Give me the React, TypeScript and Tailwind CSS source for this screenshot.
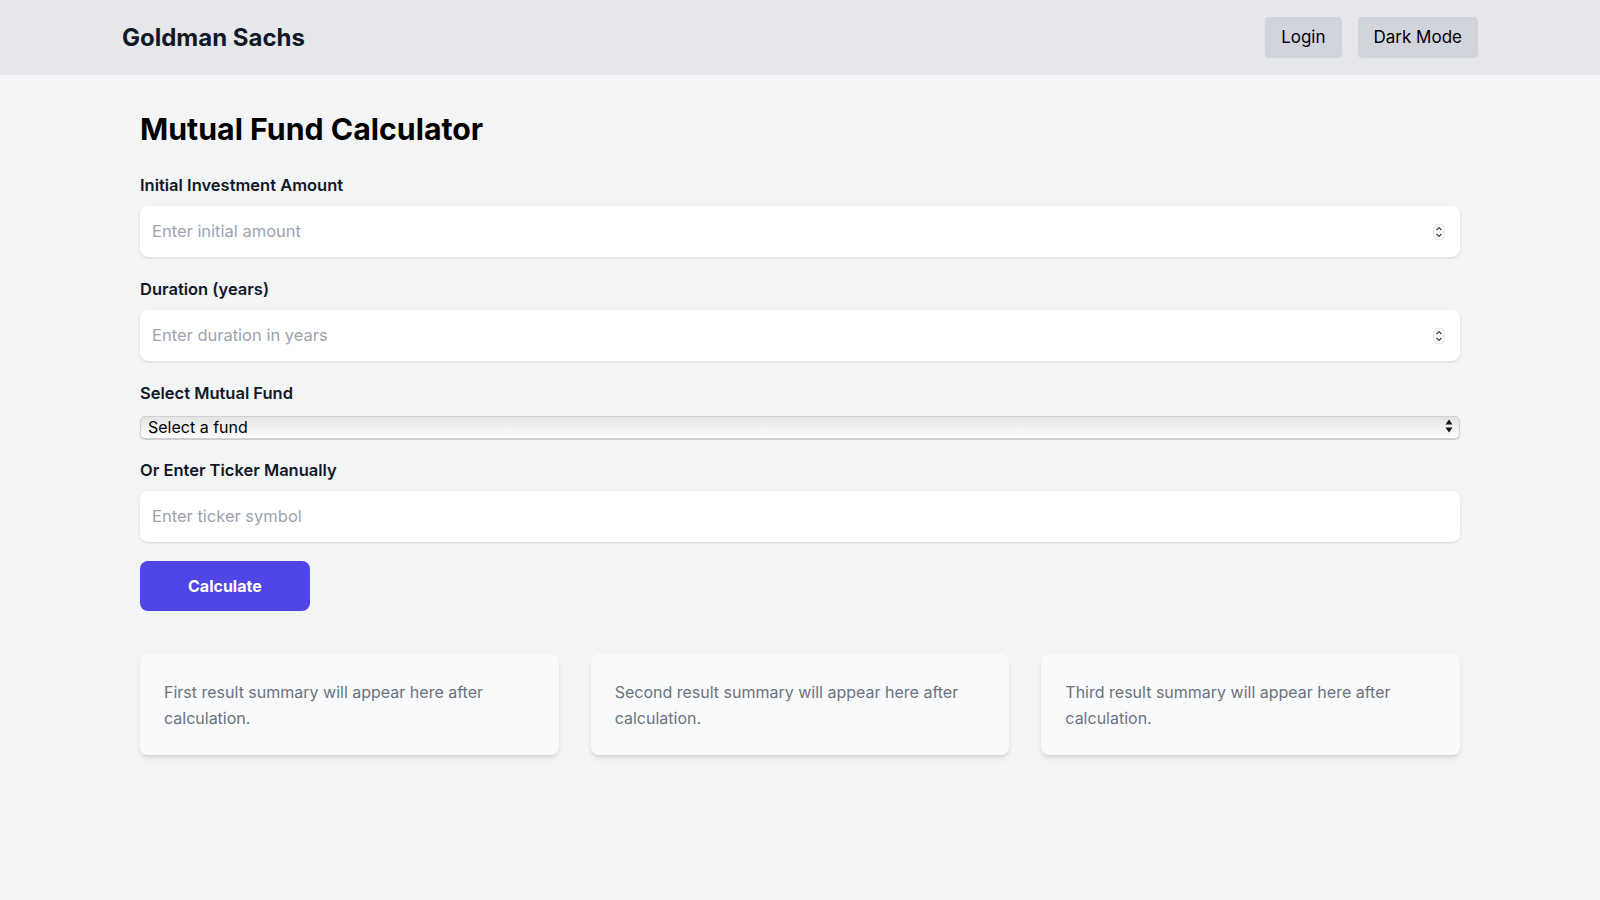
import React from 'react';

const FONT = { fontFamily: 'Inter, "Noto Sans", "Liberation Sans", sans-serif' };

function Spinner() {
  return (
    <svg width="12" height="16" viewBox="0 0 12 16" className="shrink-0">
      <rect x="0.5" y="0.5" width="11" height="15" rx="4" fill="#fff" stroke="#e2e4e8" />
      <line x1="1" y1="8" x2="11" y2="8" stroke="#eceef1" />
      <path d="M3.5 6 L6 3.6 L8.5 6" fill="none" stroke="#3f4450" strokeWidth="1.3" />
      <path d="M3.5 10 L6 12.4 L8.5 10" fill="none" stroke="#3f4450" strokeWidth="1.3" />
    </svg>
  );
}

function Label({ text, className }: { text: string; className: string }) {
  return <label className={`block text-[16.5px] leading-6 font-semibold text-[#111827] ${className}`}>{text}</label>;
}

function TextBox({ placeholder, number }: { placeholder: string; number?: boolean }) {
  return (
    <div className="flex items-center h-[51px] bg-white rounded-lg shadow-sm pl-3 pr-[15px]">
      <input
        type="text"
        placeholder={placeholder}
        className="flex-1 min-w-0 bg-transparent outline-none text-[16.5px] text-gray-900 placeholder:text-[#9ca3af]"
      />
      {number && <Spinner />}
    </div>
  );
}

export default function App() {
  const summaries = ['First', 'Second', 'Third'];

  return (
    <div className="min-h-[900px] bg-[#f3f4f6]" style={FONT}>
      <header className="bg-[#e5e7eb]">
        <div className="w-[1356px] mx-auto h-[75px] flex items-center justify-between">
          <div className="text-2xl font-bold text-[#111827]">Goldman Sachs</div>
          <div className="flex items-center gap-4">
            <button className="h-[41px] px-4 rounded bg-[#d1d5db] text-[17px] text-black">Login</button>
            <button className="h-[41px] px-4 rounded bg-[#d1d5db] text-[17px] text-black">Dark Mode</button>
          </div>
        </div>
      </header>

      <main className="max-w-[1320px] mx-auto pt-[36px]">
        <h1 className="text-[30.3px] leading-9 font-bold text-black mb-[26px]">Mutual Fund Calculator</h1>

        <div>
          <Label text="Initial Investment Amount" className="mb-[9px]" />
          <TextBox placeholder="Enter initial amount" number />
        </div>

        <div className="mt-5">
          <Label text="Duration (years)" className="mb-[9px]" />
          <TextBox placeholder="Enter duration in years" number />
        </div>

        <div className="mt-5">
          <Label text="Select Mutual Fund" className="mb-[10px]" />
          <div className="relative">
            <select
              defaultValue=""
              className="w-full h-[23px] appearance-none rounded-[5px] border border-[#d2d2d2] bg-linear-to-b from-[#e4e4e4] to-[#fdfdfd] pl-[7px] text-base leading-5 text-black shadow-[0_1px_1px_rgba(0,0,0,0.18)] outline-none"
            >
              <option value="">Select a fund</option>
              <option value="gs1">GS Growth Fund</option>
              <option value="gs2">GS Income Fund</option>
            </select>
            <svg width="8" height="16" viewBox="0 0 8 16" className="absolute right-[7px] top-[3px] pointer-events-none">
              <path d="M0.5 6.5 L4 1.5 L7.5 6.5 Z" fill="#111" />
              <path d="M0.5 9.5 L4 14.5 L7.5 9.5 Z" fill="#111" />
            </svg>
          </div>
        </div>

        <div className="mt-[19px]">
          <Label text="Or Enter Ticker Manually" className="mb-[9px]" />
          <TextBox placeholder="Enter ticker symbol" />
        </div>

        <button className="mt-[19px] h-[50px] px-12 rounded-lg bg-[#4f46e5] text-white font-bold text-base">
          Calculate
        </button>

        <div className="grid grid-cols-3 gap-8 mt-[43px]">
          {summaries.map(s => (
            <div key={s} className="bg-[#f9fafb] rounded-lg shadow-md px-6 pt-[25px] pb-6">
              <p className="text-base leading-relaxed text-[#6b7280]">
                {s} result summary will appear here after calculation.
              </p>
            </div>
          ))}
        </div>
      </main>
    </div>
  );
}
